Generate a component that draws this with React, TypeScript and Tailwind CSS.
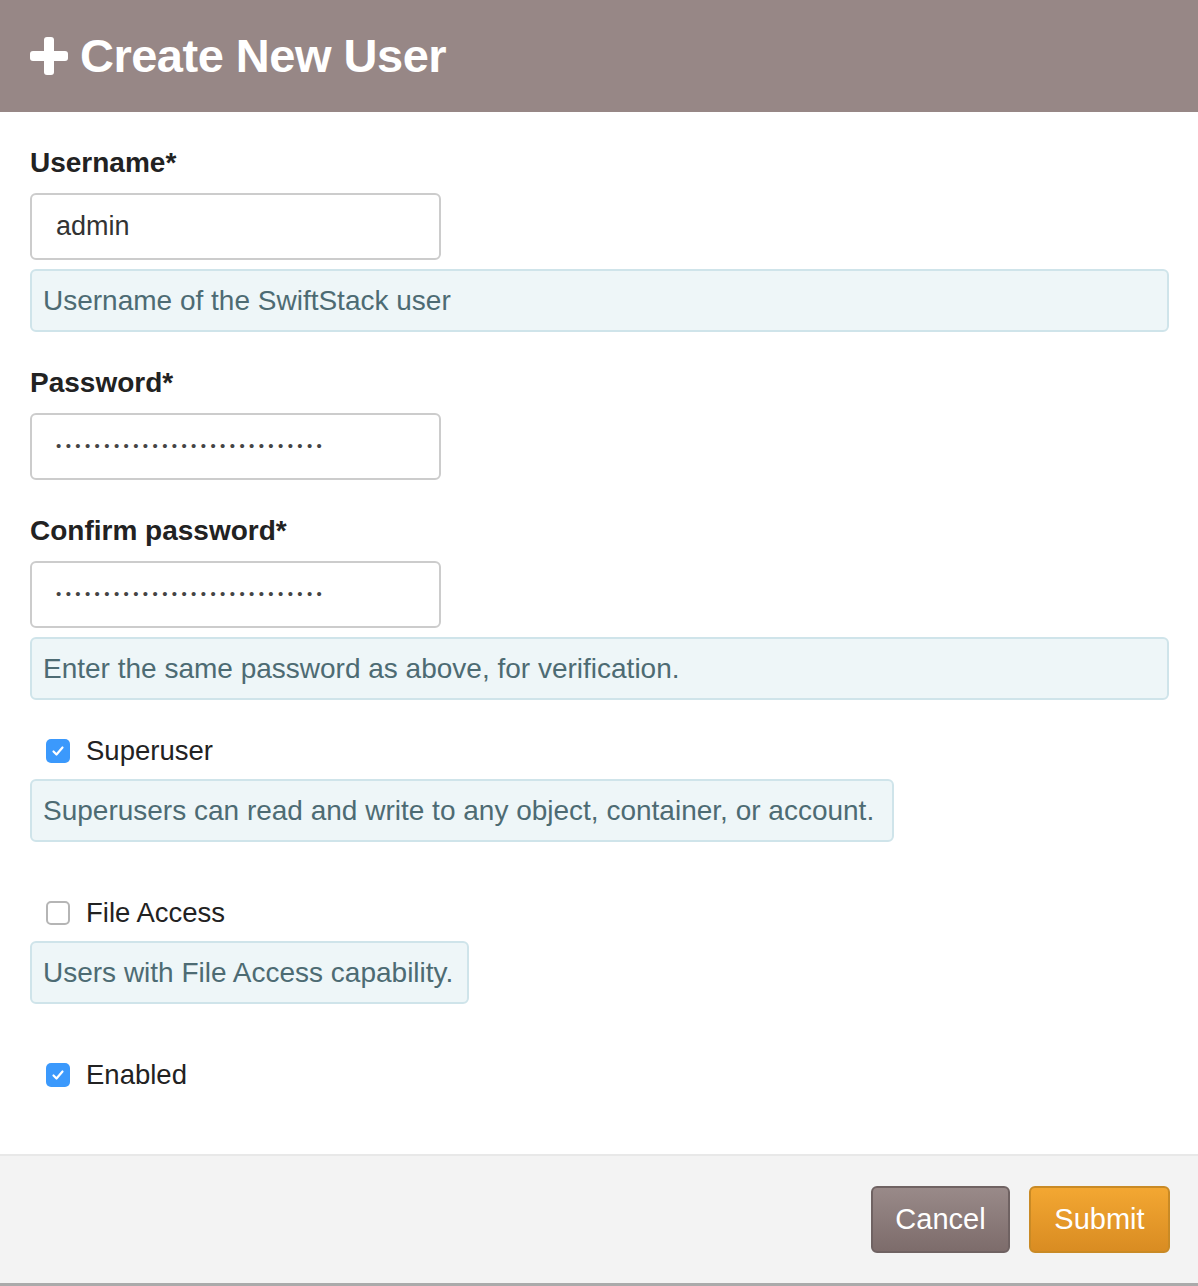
export default function App() {
  const dots = "•".repeat(28)
  const help = "rounded-md border-2 border-[#cfe4ea] bg-[#eef6f8] px-[11px] h-[63px] flex items-center text-[28px] text-[#4d6b73]"
  const input = "w-[411px] h-[67px] rounded-md border-2 border-[#cccccc] bg-white px-[24px] flex items-center text-[27px] text-[#333]"
  const label = "text-[28px] font-bold text-[#222] leading-none"
  const dotsCls = "text-[15px] tracking-[4.4px] text-[#444]"

  const Check = ({ on }: { on: boolean }) =>
    on ? (
      <span className="w-[24px] h-[24px] rounded-[5px] bg-[#3b99fc] flex items-center justify-center">
        <svg width="16" height="16" viewBox="0 0 16 16" fill="none" stroke="white" strokeWidth="2.2" strokeLinecap="round" strokeLinejoin="round">
          <path d="M3.5 8.5l3 3 6-7" />
        </svg>
      </span>
    ) : (
      <span className="w-[24px] h-[24px] rounded-[5px] border-2 border-[#b5b5b5] bg-white" />
    )

  return (
    <div className="w-[1198px] h-[1286px] bg-white flex flex-col" style={{ fontFamily: '"Liberation Sans", Arial, sans-serif' }}>
      <div className="h-[112px] bg-[#978786] flex items-center px-[30px] gap-[12px] text-white">
        <svg width="38" height="38" viewBox="0 0 38 38">
          <rect x="14" y="0" width="10" height="38" rx="3" fill="white" />
          <rect x="0" y="14" width="38" height="10" rx="3" fill="white" />
        </svg>
        <span className="text-[47px] font-bold tracking-[-0.5px]">Create New User</span>
      </div>

      <div className="flex-1 px-[30px] pt-[37px] flex flex-col">
        <div className={label}>Username*</div>
        <div className={`${input} mt-[16px]`}>admin</div>
        <div className={`${help} mt-[9px] w-[1139px]`}>Username of the SwiftStack user</div>

        <div className={`${label} mt-[37px]`}>Password*</div>
        <div className={`${input} mt-[16px]`}><span className={dotsCls}>{dots}</span></div>

        <div className={`${label} mt-[37px]`}>Confirm password*</div>
        <div className={`${input} mt-[16px]`}><span className={dotsCls}>{dots}</span></div>
        <div className={`${help} mt-[9px] w-[1139px]`}>Enter the same password as above, for verification.</div>

        <div className="mt-[38px] pl-[16px] flex items-center gap-[16px] text-[27.5px] text-[#222] h-[26px]">
          <Check on={true} />Superuser
        </div>
        <div className={`${help} mt-[15px] w-[864px]`}>Superusers can read and write to any object, container, or account.</div>

        <div className="mt-[58px] pl-[16px] flex items-center gap-[16px] text-[27.5px] text-[#222] h-[26px]">
          <Check on={false} />File Access
        </div>
        <div className={`${help} mt-[15px] w-[439px]`}>Users with File Access capability.</div>

        <div className="mt-[58px] pl-[16px] flex items-center gap-[16px] text-[27.5px] text-[#222] h-[26px]">
          <Check on={true} />Enabled
        </div>
      </div>

      <div className="h-[132px] bg-[#f3f3f3] border-t-2 border-[#e8e8e8] border-b-[3px] border-b-[#aaaaaa] flex items-center justify-end gap-[19px] px-[28px]">
        <button className="w-[139px] h-[67px] rounded-md border-2 border-[#6f6262] bg-gradient-to-b from-[#998a89] to-[#7d6c6b] text-white text-[29px]">Cancel</button>
        <button className="w-[141px] h-[67px] rounded-md border-2 border-[#c98a25] bg-gradient-to-b from-[#f3a732] to-[#d98c22] text-white text-[29px]">Submit</button>
      </div>
    </div>
  )
}
